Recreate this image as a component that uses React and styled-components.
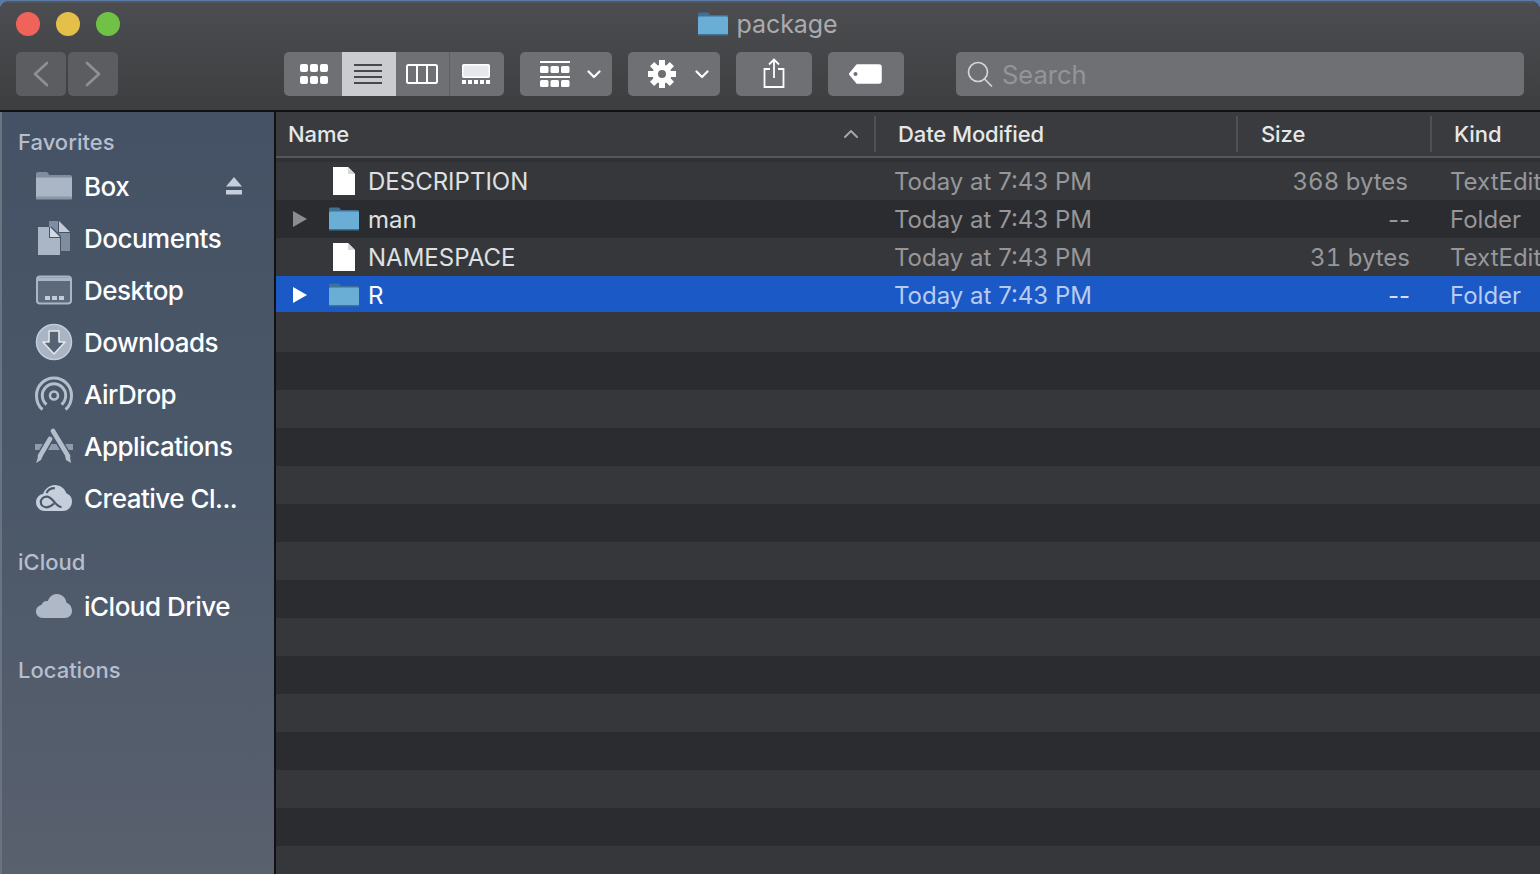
import React from 'react'
import styled, { createGlobalStyle } from 'styled-components'

const GlobalStyle = createGlobalStyle`
  html, body { margin: 0; padding: 0; background: #5c7aa8; overflow: hidden; }
  body { font-family: Inter, "Noto Sans", "Liberation Sans", sans-serif; }
`

const FolderBlue = ({ w = 32, h = 26 }) => (
  <svg width={w} height={h} viewBox="0 0 32 26">
    <path d="M1 3.500C1 2 1.600 1.500 3 1.500h7c1 0 1.500.5 2.200 1.400L13 4h16.500c1 0 1.500.7 1.500 1.600V9H1z" fill="#3f7396" />
    <path d="M1 7c0-.9.6-1.500 1.500-1.500h27c.9 0 1.500.6 1.500 1.500v15.500c0 1-.6 1.500-1.500 1.500h-27C1.600 24 1 23.500 1 22.500z" fill="#6aaed6" />
    <rect x="1" y="23" width="30" height="1.500" fill="#3f7396" />
  </svg>
)

const FileIcon = () => (
  <svg width="24" height="30" viewBox="0 0 24 30">
    <path d="M1 1h15l7 7v21H1z" fill="#fff" />
    <path d="M16 1l7 7h-7z" fill="#d8d8d8" />
  </svg>
)

const Disclosure = ({ color }) => (
  <svg width="16" height="18" viewBox="0 0 16 18">
    <path d="M1 1l14 8-14 8z" fill={color} />
  </svg>
)

const BoxIcon = () => (
  <svg width="38" height="30" viewBox="0 0 38 30">
    <path d="M1 3c0-1 .6-2 2-2h8c1.200 0 1.800.5 2.600 1.800L14 4h21c1.200 0 2 .8 2 2v3H1z" fill="#7f8da0" />
    <path d="M1 6.500h36V26c0 1.400-.8 2-2 2H3c-1.200 0-2-.6-2-2z" fill="#aab5c5" />
    <rect x="1" y="25.500" width="36" height="3" rx="1" fill="#8a97a9" />
  </svg>
)

const DocsIcon = () => (
  <svg width="34" height="36" viewBox="0 0 34 36">
    <path d="M12 1h9v12h12v18H24V16l-9-9h-3z" fill="#7f8da0" />
    <path d="M22 1l11 11H22z" fill="#c2cbd7" />
    <path d="M1 7h11v11h11v17H1z" fill="#aab5c5" />
    <path d="M13 7l10 10H13z" fill="#d3dae3" />
  </svg>
)

const DesktopIcon = () => (
  <svg width="38" height="30" viewBox="0 0 38 30">
    <rect x="2" y="1.500" width="34" height="27" rx="3" fill="#5d6a7c" stroke="#aab5c5" strokeWidth="2" />
    <rect x="3" y="2.500" width="32" height="3.500" fill="#aab5c5" />
    <rect x="10" y="21" width="5" height="4" fill="#c2cbd7" />
    <rect x="17" y="21" width="5" height="4" fill="#c2cbd7" />
    <rect x="24" y="21" width="5" height="4" fill="#c2cbd7" />
  </svg>
)

const DownloadsIcon = () => (
  <svg width="38" height="38" viewBox="0 0 38 38">
    <circle cx="19" cy="19" r="17.500" fill="#a9b4c4" stroke="#c2cbd7" strokeWidth="1.500" />
    <path d="M14 8h10v11h6L19 31 8 19h6z" fill="#566375" stroke="#e3e7ec" strokeWidth="1.600" strokeLinejoin="round" />
  </svg>
)

const AirDropIcon = () => (
  <svg width="38" height="36" viewBox="0 0 38 36" fill="none" stroke="#b5bfcc" strokeWidth="3">
    <path d="M7.500 33.500C3.500 30.300 1.500 25.300 1.500 19.500 1.500 9.800 9.300 2 19 2s17.500 7.800 17.500 17.500c0 5.800-2 10.800-6 14" />
    <path d="M11.500 28.500C8.800 26.300 7.300 23 7.300 19.500 7.300 13 12.500 7.800 19 7.800s11.700 5.200 11.700 11.700c0 3.500-1.500 6.800-4.200 9" />
    <circle cx="19" cy="19.500" r="4" strokeWidth="2.600" />
  </svg>
)

const AppsIcon = () => (
  <svg width="38" height="36" viewBox="0 0 38 36" fill="none" strokeLinecap="round">
    <rect x="0" y="16" width="38" height="6" fill="#8e9bae" />
    <path d="M18 3l16 27M15 11L4 30" stroke="#4b5869" strokeWidth="7.500" />
    <path d="M18 3l15 25M15 11L5 28" stroke="#b5bfcc" strokeWidth="4.600" />
    <path d="M30 27l5 2 1 6-5-3zM8 27l-5 2-2 6 5-3z" fill="#b5bfcc" />
  </svg>
)

const CloudLinkIcon = () => (
  <svg width="38" height="28" viewBox="0 0 38 28">
    <path d="M10 27C4.500 27 1 23 1 18.300c0-4.200 3-7.800 7.200-8.600C10 4.500 14.700 1 19.800 1c5.500 0 10 3.500 11.700 8.500 3.500 1 5.500 4.300 5.500 8 0 5.300-4 9.500-9 9.500z" fill="#c5cedb" />
    <path d="M19 19.500c-2.500 2.500-4.500 3.800-7.300 3.800-3.300 0-5.900-2.300-5.900-5.300s2.600-5.300 5.900-5.300c2.900 0 4.700 1.900 6.800 4.300 2.400 2.800 4.500 6 8 6M11.500 9c1.500-3 4.800-4.800 8.300-4.800" fill="none" stroke="#4b5869" strokeWidth="2.200" />
  </svg>
)

const CloudIcon = () => (
  <svg width="38" height="26" viewBox="0 0 38 26">
    <path d="M8 25C3.500 25 1 22 1 18.500c0-3.500 2.500-6 5.500-6.500C7.500 9 10 7.500 12.800 8 14.500 3.500 18 1 22 1c5 0 8.800 3.800 9.500 8.800C34.800 11 37 14 37 18c0 4-3 7-7 7z" fill="#aeb8c6" />
  </svg>
)

const ChevronLeft = () => (
  <svg width="16" height="26" viewBox="0 0 16 26" fill="none" stroke="#8f9092" strokeWidth="2.600" strokeLinecap="round" strokeLinejoin="round">
    <path d="M14 2L2 13l12 11" />
  </svg>
)

const ChevronRight = () => (
  <svg width="16" height="26" viewBox="0 0 16 26" fill="none" stroke="#8f9092" strokeWidth="2.600" strokeLinecap="round" strokeLinejoin="round">
    <path d="M2 2l12 11L2 24" />
  </svg>
)

const SmallChevron = () => (
  <svg width="14" height="9" viewBox="0 0 14 9" fill="none" stroke="#fff" strokeWidth="2.200" strokeLinecap="round" strokeLinejoin="round">
    <path d="M1.500 1.500L7 7l5.500-5.500" />
  </svg>
)

const IconGrid = () => (
  <svg width="28" height="20" viewBox="0 0 28 20" fill="#fff">
    {[0, 10, 20].map((x) => [0, 12].map((y) => (
      <rect key={`${x}-${y}`} x={x} y={y} width="8" height="8" rx="2" />
    )))}
  </svg>
)

const IconList = () => (
  <svg width="28" height="20" viewBox="0 0 28 20" fill="#47484a">
    {[0, 6, 12, 18].map((y) => <rect key={y} y={y} width="28" height="2" />)}
  </svg>
)

const IconColumns = () => (
  <svg width="32" height="20" viewBox="0 0 32 20" fill="none" stroke="#fff" strokeWidth="2">
    <rect x="1" y="1" width="30" height="18" rx="1.500" />
    <path d="M11 1v18M21 1v18" />
  </svg>
)

const IconGallery = () => (
  <svg width="28" height="20" viewBox="0 0 28 20">
    <rect x=".75" y=".75" width="26.500" height="12.500" rx="1" fill="#e6e8ec" stroke="#fff" strokeWidth="1.500" />
    {[0, 6, 12, 18, 24].map((x) => <rect key={x} x={x} y="16" width="4" height="4" fill="#fff" />)}
  </svg>
)

const IconArrange = () => (
  <svg width="30" height="26" viewBox="0 0 30 26" fill="#fff">
    <rect y="0" width="30" height="2" />
    <rect y="15" width="30" height="2" />
    {[0, 10.500, 21].map((x) => <rect key={x} x={x} y="5" width="8.500" height="7" rx="1.500" />)}
    {[0, 10.500, 21].map((x) => <rect key={x} x={x} y="19" width="8.500" height="7" rx="1.500" />)}
  </svg>
)

const IconGear = () => (
  <svg width="28" height="28" viewBox="0 0 28 28">
    <g fill="#fff">
      {[0, 45, 90, 135].map((a) => (
        <rect key={a} x="11" y="0" width="6" height="28" transform={`rotate(${a} 14 14)`} />
      ))}
      <circle cx="14" cy="14" r="9.500" />
    </g>
    <circle cx="14" cy="14" r="4" fill="#6f7073" />
  </svg>
)

const IconShare = () => (
  <svg width="22" height="33" viewBox="0 0 22 33" fill="none" stroke="#fff" strokeWidth="1.800">
    <path d="M7 11H1.500v18h19V11H15" />
    <path d="M11 20V1.500M6 6.500l5-5 5 5" />
  </svg>
)

const IconTag = () => (
  <svg width="34" height="20" viewBox="1 0 34 20">
    <path d="M9 1h22c1.200 0 2 .8 2 2v14c0 1.200-.8 2-2 2H9L1.500 10z" fill="#fff" stroke="#fff" strokeWidth="1.500" strokeLinejoin="round" />
    <circle cx="7.500" cy="10" r="2" fill="#6f7073" />
  </svg>
)

const IconSearch = () => (
  <svg width="26" height="26" viewBox="0 0 26 26" fill="none" stroke="#d4d5d7" strokeWidth="1.700">
    <circle cx="11" cy="11" r="9.500" />
    <path d="M17.500 18l7 7" strokeLinecap="round" />
  </svg>
)

const EjectIcon = () => (
  <svg width="18" height="18" viewBox="0 0 18 18" fill="#c5cedb">
    <path d="M9 0l8 9.500H1z" />
    <rect x="1" y="13" width="16" height="4.500" />
  </svg>
)

const favorites = [
  { name: 'Box', icon: <BoxIcon />, eject: true },
  { name: 'Documents', icon: <DocsIcon /> },
  { name: 'Desktop', icon: <DesktopIcon /> },
  { name: 'Downloads', icon: <DownloadsIcon /> },
  { name: 'AirDrop', icon: <AirDropIcon /> },
  { name: 'Applications', icon: <AppsIcon /> },
  { name: 'Creative Cl...', icon: <CloudLinkIcon /> },
]

const files = [
  { name: 'DESCRIPTION', size: '368 bytes', kind: 'TextEdit', sizeShift: true },
  { name: 'man', size: '--', kind: 'Folder', folder: true },
  { name: 'NAMESPACE', size: '31 bytes', kind: 'TextEdit' },
  { name: 'R', size: '--', kind: 'Folder', folder: true, selected: true },
]

const App = () => {
  return (
    <>
      <GlobalStyle />
      <Window>
        <TitleBar>
          <TitleRow>
            <Lights>
              <Light $color="#f0635a" />
              <Light $color="#e4c04a" />
              <Light $color="#70c146" />
            </Lights>
            <Title>
              <FolderBlue w={32} h={26} />
              <span>package</span>
            </Title>
          </TitleRow>
          <Toolbar>
            <NavGroup>
              <NavButton><ChevronLeft /></NavButton>
              <NavButton><ChevronRight /></NavButton>
            </NavGroup>
            <ViewGroup>
              <ViewButton $w={58} $pl={2}><IconGrid /></ViewButton>
              <ViewButton $w={54} $pr={2} $active><IconList /></ViewButton>
              <ViewButton $w={53} $pr={1}><IconColumns /></ViewButton>
              <ViewButton $w={55} $pr={2} $divider><IconGallery /></ViewButton>
            </ViewGroup>
            <ToolButton $w={92} $menu $gap={17}><IconArrange /><SmallChevron /></ToolButton>
            <ToolButton $w={92} $menu $gap={19}><IconGear /><SmallChevron /></ToolButton>
            <ToolButton $w={76}><IconShare /></ToolButton>
            <ToolButton $w={76}><IconTag /></ToolButton>
            <SearchBox>
              <IconSearch />
              <span>Search</span>
            </SearchBox>
          </Toolbar>
        </TitleBar>
        <Body>
          <Sidebar>
            <SectionLabel>Favorites</SectionLabel>
            {favorites.map((f) => (
              <SideItem key={f.name}>
                <SideIcon>{f.icon}</SideIcon>
                <span>{f.name}</span>
                {f.eject && <Eject><EjectIcon /></Eject>}
              </SideItem>
            ))}
            <SectionLabel $top={23}>iCloud</SectionLabel>
            <SideItem>
              <SideIcon><CloudIcon /></SideIcon>
              <span>iCloud Drive</span>
            </SideItem>
            <SectionLabel $top={23}>Locations</SectionLabel>
          </Sidebar>
          <Main>
            <HeaderRow>
              <HeaderCell $w={598} $pl={12}>
                Name
                <SortArrow>
                  <svg width="16" height="10" viewBox="0 0 16 10" fill="none" stroke="#a4a5a7" strokeWidth="2" strokeLinecap="round" strokeLinejoin="round">
                    <path d="M2 8l6-6 6 6" />
                  </svg>
                </SortArrow>
              </HeaderCell>
              <HeaderCell $w={362} $pl={22} $sep>Date Modified</HeaderCell>
              <HeaderCell $w={194} $pl={23} $sep>Size</HeaderCell>
              <HeaderCell $w={110} $pl={22} $sep>Kind</HeaderCell>
            </HeaderRow>
            <Rows>
              {files.map((f, i) => (
                <Row key={f.name} $odd={i % 2 === 1} $selected={f.selected}>
                  <NameCell>
                    <Arrow>{f.folder && <Disclosure color={f.selected ? '#fff' : '#8b8c8e'} />}</Arrow>
                    <FileGlyph>{f.folder ? <FolderBlue /> : <FileIcon />}</FileGlyph>
                    <FileName $selected={f.selected}>{f.name}</FileName>
                  </NameCell>
                  <DateCell $selected={f.selected}>Today at 7:43 PM</DateCell>
                  <SizeCell $selected={f.selected} $shift={f.sizeShift} $tabular={!f.folder}>{f.size}</SizeCell>
                  <KindCell $selected={f.selected}>{f.kind}</KindCell>
                </Row>
              ))}
              {Array.from({ length: 15 }).map((_, i) => (
                <Row key={i} $odd={i % 2 === 1} />
              ))}
            </Rows>
          </Main>
        </Body>
      </Window>
    </>
  )
}

export default App

const Window = styled.div`
  width: 1540px;
  height: 873px;
  margin-top: 1px;
  border-radius: 9px 9px 0 0;
  overflow: hidden;
  display: flex;
  flex-direction: column;
  background: #2d2e31;
`

const TitleBar = styled.div`
  height: 111px;
  flex: none;
  box-sizing: border-box;
  border-top: 2px solid #55575b;
  border-bottom: 2px solid #111;
  padding: 6px 16px 0;
  background: linear-gradient(180deg, #4b4d50 0%, #3d3e40 100%);
`

const TitleRow = styled.div`
  display: grid;
  grid-template-columns: 1fr auto 1fr;
  align-items: center;
  height: 26px;
  margin-bottom: 17px;
`

const Lights = styled.div`
  display: flex;
  gap: 16px;
`

const Light = styled.div`
  width: 24px;
  height: 24px;
  border-radius: 50%;
  background: ${(p) => p.$color};
`

const Title = styled.div`
  display: flex;
  align-items: center;
  gap: 8px;
  color: #a9abae;
  font-size: 25px;
  line-height: 30px;
  padding-right: 6px;
  letter-spacing: -0.1px;
`

const Toolbar = styled.div`
  display: flex;
  align-items: flex-start;
  height: 44px;
`

const NavGroup = styled.div`
  display: flex;
  gap: 2px;
  margin-right: 166px;
`

const NavButton = styled.div`
  width: 50px;
  height: 44px;
  border-radius: 5px;
  background: #5c5d60;
  display: flex;
  align-items: center;
  justify-content: center;
`

const ViewGroup = styled.div`
  display: flex;
  height: 44px;
  border-radius: 5px;
  overflow: hidden;
  background: #6f7073;
`

const ViewButton = styled.div`
  width: ${(p) => p.$w}px;
  display: flex;
  align-items: center;
  justify-content: center;
  padding-left: ${(p) => p.$pl || 0}px;
  padding-right: ${(p) => p.$pr || 0}px;
  background: ${(p) => (p.$active ? '#caccd0' : 'transparent')};
  border-left: ${(p) => (p.$divider ? '1px solid #5d5e61' : 'none')};
  box-sizing: border-box;
`

const ToolButton = styled.div`
  width: ${(p) => p.$w}px;
  height: 44px;
  margin-left: 16px;
  border-radius: 5px;
  background: #6f7073;
  box-sizing: border-box;
  display: flex;
  align-items: center;
  justify-content: ${(p) => (p.$menu ? 'flex-start' : 'center')};
  padding-left: ${(p) => (p.$menu ? '20px' : '0')};
  gap: ${(p) => p.$gap || 0}px;
`

const SearchBox = styled.div`
  width: 568px;
  height: 44px;
  margin-left: 52px;
  border-radius: 5px;
  background: #6f7073;
  box-sizing: border-box;
  padding-left: 11px;
  display: flex;
  align-items: center;
  gap: 9px;
  color: #949598;
  font-size: 25.5px;
`

const Body = styled.div`
  flex: 1;
  display: flex;
  min-height: 0;
`

const Sidebar = styled.div`
  width: 276px;
  flex: none;
  box-sizing: border-box;
  padding: 15px 0 0 2px;
  background: linear-gradient(180deg, #455265 0%, #4b5869 50%, #59606e 100%);
  border-right: 2px solid #111;
  box-shadow: inset 2px 0 0 #6b7280;
`

const SectionLabel = styled.div`
  margin-top: ${(p) => p.$top || 0}px;
  margin-bottom: 3px;
  padding-left: 16px;
  height: 30px;
  line-height: 30px;
  color: #b5bfcd;
  font-size: 22px;
  font-weight: 500;
`

const SideItem = styled.div`
  height: 52px;
  display: flex;
  align-items: center;
  padding-left: 33px;
  padding-right: 31px;
  color: #fff;
  font-size: 26px;
  letter-spacing: -0.5px;
  font-weight: 500;
`

const SideIcon = styled.div`
  width: 38px;
  height: 40px;
  margin-right: 11px;
  display: flex;
  align-items: center;
  justify-content: center;
  flex: none;
`

const Eject = styled.div`
  margin-left: auto;
  display: flex;
`

const Main = styled.div`
  flex: 1;
  min-width: 0;
  overflow: hidden;
`

const HeaderRow = styled.div`
  height: 46px;
  display: flex;
  box-sizing: border-box;
  background: #393b3f;
  border-bottom: 2px solid #55575a;
`

const HeaderCell = styled.div`
  position: relative;
  width: ${(p) => p.$w}px;
  flex: none;
  box-sizing: border-box;
  padding-left: ${(p) => p.$pl}px;
  margin-top: 4px;
  height: 36px;
  line-height: 36px;
  color: #e6e7e8;
  font-size: 22px;
  font-weight: 500;
  letter-spacing: -0.1px;
  border-left: ${(p) => (p.$sep ? '2px solid #4f5155' : 'none')};
`

const SortArrow = styled.span`
  position: absolute;
  right: 15px;
  top: 13px;
  display: flex;
`

const Rows = styled.div`
  padding-top: 4px;
  background: #303135;
`

const Row = styled.div`
  height: 38px;
  width: 1264px;
  display: grid;
  grid-template-columns: 618px 318px 238px 1fr;
  align-items: center;
  font-size: 24px;
  background: ${(p) => (p.$selected ? '#1b59c7' : p.$odd ? '#2b2c2f' : '#36373b')};
  box-shadow: ${(p) => (p.$selected ? 'inset 0 -2px 0 #36373b' : 'none')};
`

const NameCell = styled.div`
  display: flex;
  align-items: center;
`

const Arrow = styled.div`
  width: 16px;
  height: 18px;
  margin-left: 16px;
  margin-right: 20px;
  flex: none;
  display: flex;
`

const FileGlyph = styled.div`
  width: 32px;
  height: 32px;
  display: flex;
  align-items: center;
  justify-content: center;
  margin-right: 8px;
`

const FileName = styled.span`
  color: ${(p) => (p.$selected ? '#fff' : '#dfe0e1')};
`

const DateCell = styled.div`
  color: ${(p) => (p.$selected ? '#b9ccf0' : '#96979a')};
`

const SizeCell = styled.div`
  text-align: right;
  font-variant-numeric: ${(p) => (p.$tabular ? 'tabular-nums' : 'normal')};
  padding-right: ${(p) => (p.$shift ? '42px' : '40px')};
  color: ${(p) => (p.$selected ? '#d5e0f5' : '#96979a')};
`

const KindCell = styled.div`
  white-space: nowrap;
  overflow: hidden;
  color: ${(p) => (p.$selected ? '#b9ccf0' : '#96979a')};
`
